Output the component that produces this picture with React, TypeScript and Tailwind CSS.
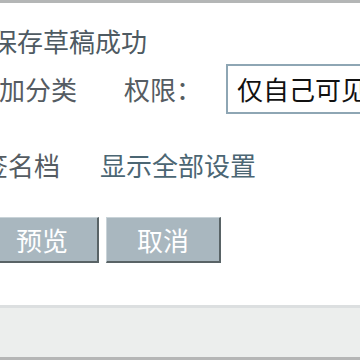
export default function App() {
  const font = { fontFamily: '"Noto Sans CJK SC", "Noto Sans", sans-serif' }
  return (
    <div
      className="w-[360px] h-[360px] overflow-hidden bg-white flex flex-col text-[26px] leading-[26px]"
      style={font}
    >
      <div className="h-[3px] bg-[#b4b6b6] shrink-0" />

      {/* save notice */}
      <div className="h-[61px] shrink-0 flex items-center pt-[14px] whitespace-nowrap">
        <span className="-ml-[9px] text-[#4e5a62]">保存草稿成功</span>
      </div>

      {/* category + permission */}
      <div className="h-[50px] shrink-0 flex items-center whitespace-nowrap">
        <span className="-ml-[27px] text-[#555c62]">添加分类</span>
        <span className="ml-[47px] text-[#555c62]">权限：</span>
        <div className="ml-[24px] h-[50px] w-[180px] shrink-0 border-2 border-[#8ea6b4] bg-white flex items-center pl-[9px] text-[#111]">
          仅自己可见
        </div>
      </div>

      {/* signature row */}
      <div className="mt-[38px] h-[26px] shrink-0 flex items-center whitespace-nowrap">
        <span className="-ml-[18px] text-[#555c62]">签名档</span>
        <span className="ml-[40px] text-[#4b6673]">显示全部设置</span>
      </div>

      {/* buttons */}
      <div className="mt-[39px] h-[46px] shrink-0 flex gap-[7px] whitespace-nowrap">
        <button className="-ml-[14px] w-[113px] h-[46px] bg-[#a9b7bf] text-white border-t border-l border-[#c9d3d8] border-r-2 border-b-2 border-r-[#596366] border-b-[#596366] flex items-center justify-center">
          预览
        </button>
        <button className="w-[115px] h-[46px] bg-[#a9b7bf] text-white border-t border-l border-[#c9d3d8] border-r-2 border-b-2 border-r-[#596366] border-b-[#596366] flex items-center justify-center">
          取消
        </button>
      </div>

      <div className="flex-1" />

      {/* footer bar */}
      <div className="h-[55px] shrink-0 border-t-[3px] border-[#dcdfe0] bg-[#eceeed] border-b-[3px] border-b-[#b5b6b6]" />
    </div>
  )
}
